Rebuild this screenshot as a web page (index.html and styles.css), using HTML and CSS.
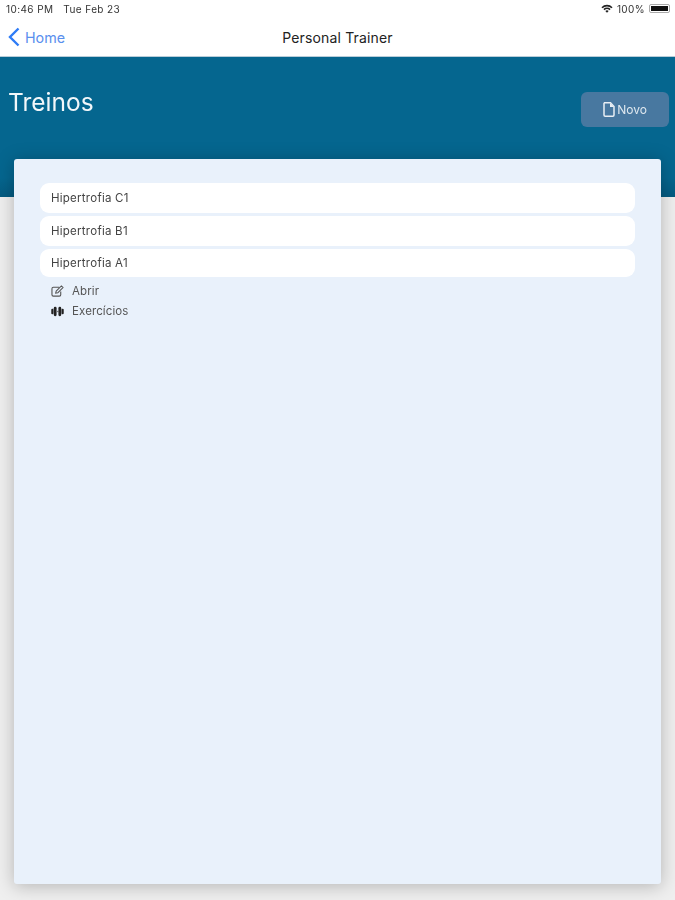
FILE: index.html
```html
<!DOCTYPE html>
<html lang="en">
<head>
    <meta charset="UTF-8">
    <meta name="viewport" content="width=device-width, initial-scale=1.0">
    <title>Personal Trainer - Treinos</title>
    <link rel="stylesheet" href="styles.css">
</head>
<body>
<div class="page">
    <div class="status-bar">
        <span class="status-time">10:46 PM</span>
        <span class="status-date">Tue Feb 23</span>
        <span class="status-right">
            <svg class="wifi-icon" viewBox="0 0 14 10" width="12" height="9">
                <path d="M0.5 3.4 A9 9 0 0 1 13.5 3.4 L12.2 4.8 A7.2 7.2 0 0 0 1.8 4.8 Z" fill="#222"/>
                <path d="M2.8 5.6 A6 6 0 0 1 11.2 5.6 L9.9 7 A4.2 4.2 0 0 0 4.1 7 Z" fill="#222"/>
                <path d="M5 7.8 A3 3 0 0 1 9 7.8 L7 10 Z" fill="#222"/>
            </svg>
            <span>100%</span>
            <span class="battery"><span class="battery-fill"></span></span>
        </span>
    </div>
    <div class="nav-bar">
        <a class="nav-back">
            <svg viewBox="0 0 12 20" width="12" height="20">
                <path d="M10.5 1.5 L2 10 L10.5 18.5" fill="none" stroke="#2f7cf6" stroke-width="2.4"/>
            </svg>
            <span>Home</span>
        </a>
        <div class="nav-title">Personal Trainer</div>
    </div>
    <div class="hero">
        <h1>Treinos</h1>
        <button class="new-btn">
            <svg viewBox="0 0 12 15" width="12" height="15">
                <path d="M1.5 0.8 H7.5 L11 4.5 V13 Q11 14.2 9.8 14.2 H2.2 Q1 14.2 1 13 V1.5 Z" fill="none" stroke="#e8eef4" stroke-width="1.5"/>
                <path d="M7 1 V5 H11 Z" fill="#e8eef4"/>
            </svg>
            <span>Novo</span>
        </button>
    </div>
    <div class="card">
        <div class="item">Hipertrofia C1</div>
        <div class="item">Hipertrofia B1</div>
        <div class="item item-short">Hipertrofia A1</div>
        <div class="actions">
            <div class="action">
                <svg viewBox="0 0 14 13" width="13" height="12">
                    <path d="M9 2.5 H2.5 Q1 2.5 1 4 V10.5 Q1 12 2.5 12 H9 Q10.5 12 10.5 10.5 V7" fill="none" stroke="#555" stroke-width="1.2"/>
                    <path d="M5 8.8 L5.6 6.6 L11.2 1 L13 2.8 L7.4 8.3 Z" fill="none" stroke="#555" stroke-width="1.1"/>
                </svg>
                <span>Abrir</span>
            </div>
            <div class="action">
                <svg viewBox="0 0 14 11" width="13" height="11">
                    <rect x="0.3" y="2.5" width="2.4" height="6" rx="1.1" fill="#222"/>
                    <rect x="3" y="0.5" width="3" height="10" rx="1.4" fill="#222"/>
                    <rect x="6" y="4.8" width="2" height="1.4" fill="#777"/>
                    <rect x="8" y="0.5" width="3" height="10" rx="1.4" fill="#222"/>
                    <rect x="11.3" y="2.5" width="2.4" height="6" rx="1.1" fill="#222"/>
                </svg>
                <span>Exercícios</span>
            </div>
        </div>
    </div>
</div>
</body>
</html>
```

FILE: styles.css
```css
html, body {
    height: 100%;
}
body {
    margin: 0;
    background-color: #efefef;
    font-family: Inter, "Liberation Sans", Arial, sans-serif;
    color: #333;
    overflow: hidden;
}
/* the reference is a soft, upscaled capture */
.page {
    height: 100%;
    filter: blur(0.45px);
}

/* top of the screen */
.status-bar {
    height: 17px;
    padding: 0 5px 0 6px;
    background: white;
    display: flex;
    align-items: center;
    font-size: 10px;
    letter-spacing: 0.4px;
    color: #333;
}
.status-date {
    margin-left: 10px;
}
.status-right {
    margin-left: auto;
    display: flex;
    align-items: center;
    gap: 4px;
}
.battery {
    width: 21px;
    height: 9px;
    padding: 1px;
    box-sizing: border-box;
    border: 1px solid #aaa;
    border-radius: 2px;
    display: flex;
}
.battery-fill {
    flex: 1;
    background: #111;
}
.nav-bar {
    height: 39px;
    background: white;
    border-bottom: 1px solid #b9cdd9;
    position: relative;
    display: flex;
    align-items: center;
    justify-content: center;
}
.nav-back {
    position: absolute;
    left: 8px;
    top: 10px;
    display: flex;
    align-items: center;
    gap: 5px;
    color: #5a8fee;
    font-size: 14.3px;
}
.nav-title {
    font-size: 14px;
    letter-spacing: 0.15px;
    color: #222;
    margin-top: 1px;
}

/* blue band */
.hero {
    height: 140px;
    box-sizing: border-box;
    padding: 28px 6px 0 8px;
    background: linear-gradient(#05668f 0, #05668f 86%, #045a80 100%);
    display: flex;
    justify-content: space-between;
    align-items: flex-start;
}
.hero h1 {
    margin: 0;
    color: #f2f7fa;
    font-size: 24.5px;
    font-weight: 400;
    line-height: 34px;
}
.new-btn {
    width: 88px;
    height: 35px;
    margin-top: 7px;
    border: none;
    border-radius: 6px;
    background: #4878a0;
    color: #dfe8ef;
    font-family: inherit;
    font-size: 12px;
    display: flex;
    align-items: center;
    justify-content: center;
    gap: 2px;
}

/* main card */
.card {
    height: 725px;
    box-sizing: border-box;
    margin: -38px 14px 0;
    padding: 24px 26px;
    background: #e9f1fb;
    border-radius: 3px;
    box-shadow: 0 2px 18px rgba(0, 0, 0, 0.25);
    position: relative;
}
.item {
    height: 29.5px;
    margin-bottom: 3.5px;
    padding-left: 11px;
    background: white;
    border-radius: 9px;
    display: flex;
    align-items: center;
    font-size: 11.5px;
    letter-spacing: 0.25px;
    color: #444;
}
.item-short {
    height: 28px;
}
.actions {
    padding-left: 11px;
}
.action {
    height: 20.5px;
    display: flex;
    align-items: center;
    gap: 8px;
    font-size: 11.5px;
    letter-spacing: 0.1px;
    color: #555;
}
```
